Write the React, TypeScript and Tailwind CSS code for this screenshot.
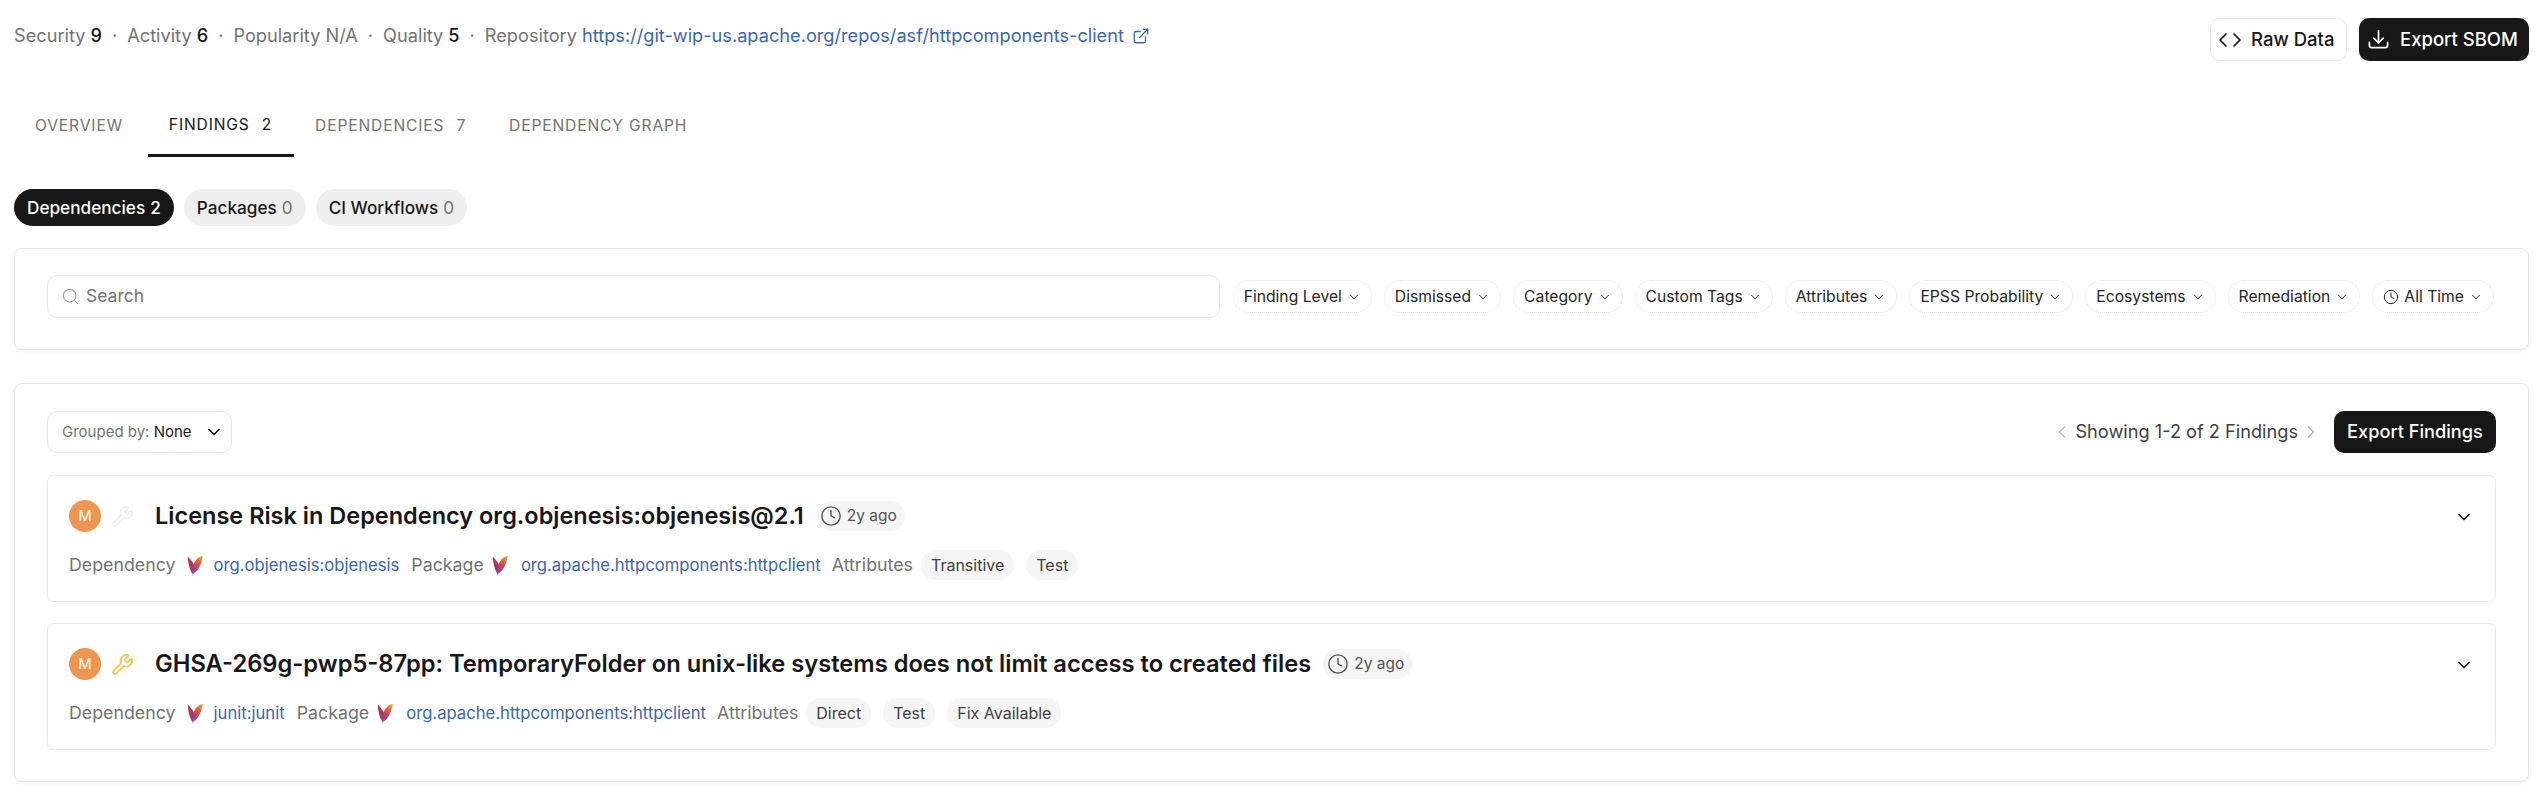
import { ChevronDown, ChevronLeft, ChevronRight, Clock, Code, ExternalLink, Search, Wrench } from "lucide-react";

const FONT = "font-['Inter',sans-serif]";

function Feather({ id }: { id: string }) {
  return (
    <svg viewBox="0 0 16 21" className="h-[21px] w-[16px] shrink-0" fill="none">
      <defs>
        <linearGradient id={`${id}r`} x1="15.5" y1="1" x2="6" y2="19" gradientUnits="userSpaceOnUse">
          <stop offset="0" stopColor="#f2a83e" />
          <stop offset="0.4" stopColor="#e0573c" />
          <stop offset="0.8" stopColor="#9b3c8e" />
          <stop offset="1" stopColor="#c06aa8" />
        </linearGradient>
        <linearGradient id={`${id}l`} x1="1" y1="1" x2="6" y2="19" gradientUnits="userSpaceOnUse">
          <stop offset="0" stopColor="#c9403c" />
          <stop offset="0.6" stopColor="#a8355f" />
          <stop offset="1" stopColor="#8f3f98" />
        </linearGradient>
      </defs>
      <path d="M0.8 1.5C0.6 7 2.5 14 5.5 19.5L8 12C6.5 8 3.5 4 0.8 1.5Z" fill={`url(#${id}l)`} />
      <path d="M15.8 1C11 1.5 7.5 6 6.5 10L5.5 19.5C10 17 14.5 10 15.8 1Z" fill={`url(#${id}r)`} />
      <path d="M5.6 19.4L5.2 20.8" stroke="#b9a0c0" strokeWidth="0.6" />
    </svg>
  );
}

function ExportIcon() {
  return (
    <svg viewBox="0 0 24 24" className="h-[23px] w-[23px] shrink-0" fill="none" stroke="currentColor" strokeWidth={1.75} strokeLinecap="round" strokeLinejoin="round">
      <path d="M12 3v12" />
      <path d="M7 10.5l5 5 5-5" />
      <path d="M2.5 15v3a2.5 2.5 0 0 0 2.5 2.5h14a2.5 2.5 0 0 0 2.5-2.5v-3" />
    </svg>
  );
}

function Filter({ label, clock }: { label: string; clock?: boolean }) {
  return (
    <button className="flex h-[33px] items-center gap-[5px] whitespace-nowrap rounded-full border border-dotted border-[#e0e0e0] px-[10px] text-[15.7px] text-[#262626]">
      {clock && <Clock className="h-[16px] w-[16px]" strokeWidth={1.5} />}
      <span>{label}</span>
      <ChevronDown className="h-[14px] w-[14px] text-[#404040]" strokeWidth={1.75} />
    </button>
  );
}

function Chip({ label }: { label: string }) {
  return <span className="flex h-[30px] items-center whitespace-nowrap rounded-full bg-[#f5f5f5] px-[10px] text-[16px] text-[#404040]">{label}</span>;
}

function Finding({ id, title, titleSize, wrench, dep, chips }: { id: string; title: string; titleSize: string; wrench: string; dep: string; chips: string[] }) {
  return (
    <div className="flex h-[127px] items-start justify-between rounded-[7px] border border-[#e8e8e8] pl-[21px] pr-[21px]">
      <div className="flex flex-col">
        <div className="mt-[24px] flex h-[32px] items-center">
          <span className="flex h-[32px] w-[32px] items-center justify-center rounded-full bg-[#f09550] text-[15px] text-white">M</span>
          <Wrench className={`ml-[10px] h-[23px] w-[23px] ${wrench}`} strokeWidth={1.75} />
          <h3 className={`ml-[21px] font-semibold text-[#171717] ${titleSize}`}>{title}</h3>
          <span className="ml-[12px] flex h-[30px] items-center gap-[5px] rounded-full bg-[#f5f5f5] pl-[4px] pr-[8px] text-[15.5px] text-[#525252]">
            <Clock className="h-[22px] w-[22px]" strokeWidth={1.5} />2y ago
          </span>
        </div>
        <div className="mt-[17px] flex h-[32px] items-center text-[17.8px] text-[#737373]">
          <span>Dependency</span>
          <span className="ml-[11px]"><Feather id={`${id}a`} /></span>
          <a className="ml-[11px] text-[16.65px] text-[#3c66b1]">{dep}</a>
          <span className="ml-[12px]">Package</span>
          <span className="ml-[8px]"><Feather id={`${id}b`} /></span>
          <a className="ml-[13px] text-[16.65px] text-[#3c66b1]">org.apache.httpcomponents:httpclient</a>
          <span className="ml-[11px]">Attributes</span>
          <div className="ml-[8px] flex gap-[12px]">
            {chips.map((c) => <Chip key={c} label={c} />)}
          </div>
        </div>
      </div>
      <ChevronDown className="mt-[31px] h-[20px] w-[20px] text-[#171717]" strokeWidth={2} />
    </div>
  );
}

export default function App() {
  return (
    <div className={`${FONT} min-h-[800px] bg-white pl-[14px] pr-[15px] pt-[18px] text-[#171717]`}>
      <div className="flex items-start justify-between">
        <div className="mt-[4px] flex items-center text-[18.2px] text-[#737373]">
          <span>Security</span><b className="ml-[5px] font-medium text-[#171717]">9</b>
          <span className="mx-[10px]">·</span>
          <span>Activity</span><b className="ml-[5px] font-medium text-[#171717]">6</b>
          <span className="mx-[10px]">·</span>
          <span>Popularity N/A</span>
          <span className="mx-[10px]">·</span>
          <span>Quality</span><b className="ml-[5px] font-medium text-[#171717]">5</b>
          <span className="mx-[10px]">·</span>
          <span>Repository</span>
          <a className="ml-[5px] text-[#3c66b1]">https://git-wip-us.apache.org/repos/asf/httpcomponents-client</a>
          <ExternalLink className="ml-[8px] h-[18px] w-[18px] text-[#3c66b1]" strokeWidth={1.75} />
        </div>
        <div className="flex gap-[12px]">
          <button className="flex h-[43px] w-[137px] items-center gap-[9px] rounded-[10px] border border-[#e8e8e8] pl-[7px] text-[18.5px] font-medium">
            <Code className="h-[24px] w-[24px]" strokeWidth={1.75} />Raw Data
          </button>
          <button className="flex h-[43px] w-[170px] items-center gap-[10px] rounded-[10px] bg-[#171717] pl-[8px] text-[18.5px] font-medium text-white">
            <ExportIcon />Export SBOM
          </button>
        </div>
      </div>

      <div className="mt-[39px] flex h-[57px] items-start">
        {[["OVERVIEW", ""], ["FINDINGS", "2"], ["DEPENDENCIES", "7"], ["DEPENDENCY GRAPH", ""]].map(([t, n], i) => (
          <div key={t} className={`flex h-[57px] items-center gap-[12px] pb-[5px] pl-[21px] text-[15.6px] tracking-[0.055em] ${i === 0 ? "pr-[25px]" : "pr-[22px]"} ${i === 1 ? "border-b-[3px] border-[#171717] pb-[2px] text-[#171717]" : "text-[#737373]"}`}>
            <span>{t}</span>{n && <span>{n}</span>}
          </div>
        ))}
      </div>

      <div className="mt-[32px] flex gap-[10px]">
        <button className="flex h-[37px] items-center gap-[5px] rounded-full bg-[#171717] px-[13px] text-[17.2px] font-medium text-white">Dependencies <span>2</span></button>
        <button className="flex h-[37px] items-center gap-[5px] rounded-full bg-[#efefef] px-[13px] text-[17.2px] font-medium">Packages <span className="font-normal text-[#737373]">0</span></button>
        <button className="flex h-[37px] items-center gap-[5px] rounded-full bg-[#efefef] px-[13px] text-[17.2px] font-medium">CI Workflows <span className="font-normal text-[#737373]">0</span></button>
      </div>

      <div className="mt-[22px] flex h-[102px] items-center gap-[13px] rounded-[8px] border border-[#e5e5e5] pb-[5px] pl-[32px] pr-[34px] shadow-[0_2px_6px_rgba(0,0,0,0.04)]">
        <div className="flex h-[43px] min-w-0 flex-1 items-center gap-[6px] rounded-[10px] border border-[#e8e8e8] pl-[13px] text-[17.5px] text-[#737373]">
          <Search className="h-[19px] w-[19px] text-[#a3a3a3]" strokeWidth={1.5} />Search
        </div>
        <div className="flex shrink-0 gap-[12px]">
          {["Finding Level", "Dismissed", "Category", "Custom Tags", "Attributes", "EPSS Probability", "Ecosystems", "Remediation"].map((f) => <Filter key={f} label={f} />)}
          <Filter label="All Time" clock />
        </div>
      </div>

      <div className="mt-[33px] flex h-[399px] flex-col rounded-[8px] border border-[#e5e5e5] px-[32px] pt-[27px] shadow-[0_2px_6px_rgba(0,0,0,0.04)]">
        <div className="flex items-center justify-between">
          <button className="flex h-[42px] w-[185px] items-center gap-[12px] rounded-[10px] border border-[#e8e8e8] pl-[14px] text-[15px] text-[#737373]">
            <span>Grouped by: <span className="text-[#171717]">None</span></span>
            <ChevronDown className="h-[20px] w-[20px] text-[#171717]" strokeWidth={2} />
          </button>
          <div className="flex items-center">
            <ChevronLeft className="h-[20px] w-[20px] text-[#b5b5b5]" strokeWidth={1.5} />
            <span className="ml-[3px] mr-[3px] text-[18.2px] text-[#404040]">Showing 1-2 of 2 Findings</span>
            <ChevronRight className="h-[20px] w-[20px] text-[#b5b5b5]" strokeWidth={1.5} />
            <button className="ml-[13px] flex h-[42px] w-[162px] items-center justify-center rounded-[10px] bg-[#171717] text-[18.2px] font-medium text-white">Export Findings</button>
          </div>
        </div>
        <div className="mt-[22px] flex flex-col gap-[21px]">
          <Finding id="f1" title="License Risk in Dependency org.objenesis:objenesis@2.1" titleSize="text-[23.5px]" wrench="text-[#efefef]" dep="org.objenesis:objenesis" chips={["Transitive", "Test"]} />
          <Finding id="f2" title="GHSA-269g-pwp5-87pp: TemporaryFolder on unix-like systems does not limit access to created files" titleSize="text-[23.7px]" wrench="text-[#f3c64f]" dep="junit:junit" chips={["Direct", "Test", "Fix Available"]} />
        </div>
      </div>
    </div>
  );
}
